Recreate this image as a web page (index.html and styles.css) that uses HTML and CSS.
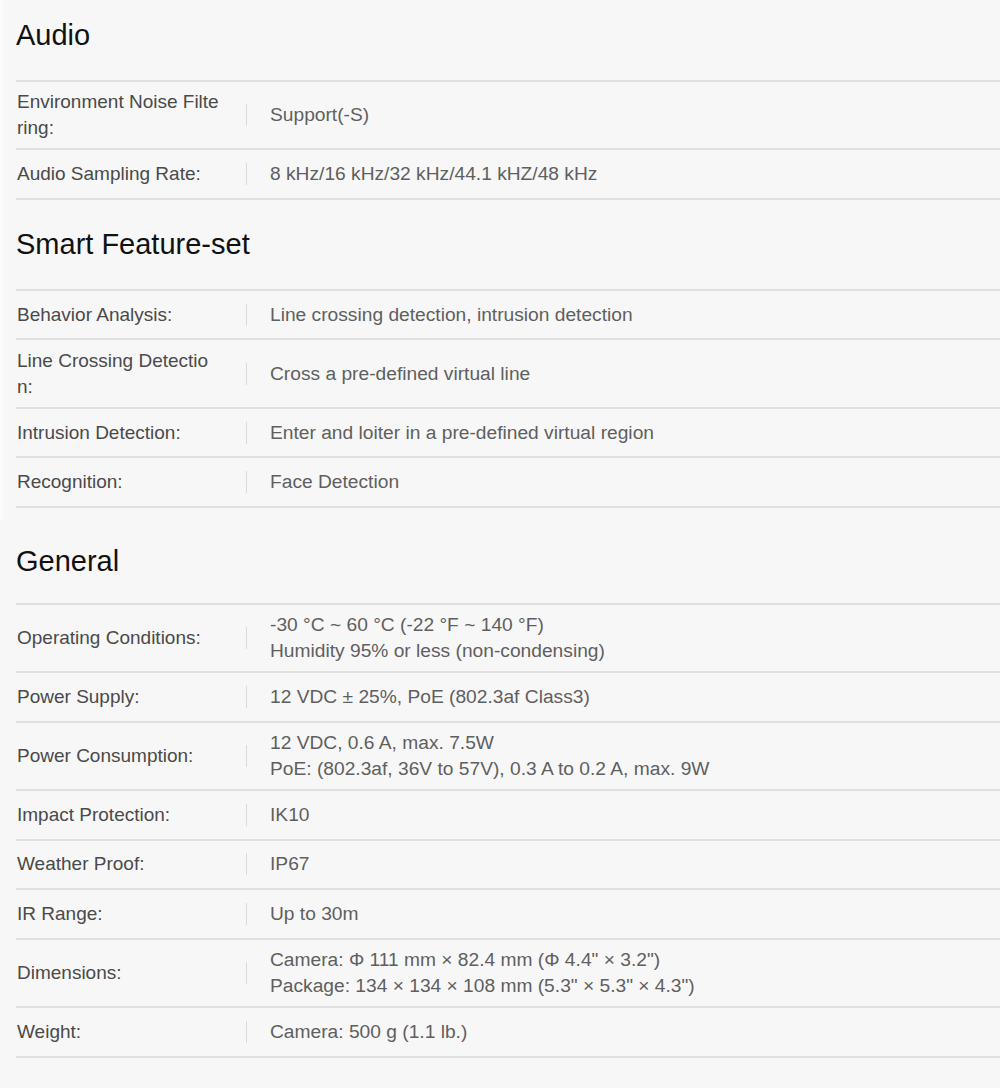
FILE: index.html
```html
<!DOCTYPE html>
<html lang="en">
<head>
<meta charset="utf-8">
<title>Specifications</title>
<link rel="stylesheet" href="styles.css">
</head>
<body>
<div class="page">
  <div class="group-top">
    <section class="section">
      <h2 class="section-title">Audio</h2>
      <div class="spec-table">
        <div class="row"><div class="label">Environment Noise Filtering:</div><div class="value">Support(-S)</div></div>
        <div class="row"><div class="label">Audio Sampling Rate:</div><div class="value">8 kHz/16 kHz/32 kHz/44.1 kHZ/48 kHz</div></div>
      </div>
    </section>
    <section class="section section-smart">
      <h2 class="section-title">Smart Feature-set</h2>
      <div class="spec-table">
        <div class="row"><div class="label">Behavior Analysis:</div><div class="value">Line crossing detection, intrusion detection</div></div>
        <div class="row"><div class="label">Line Crossing Detection:</div><div class="value">Cross a pre-defined virtual line</div></div>
        <div class="row"><div class="label">Intrusion Detection:</div><div class="value">Enter and loiter in a pre-defined virtual region</div></div>
        <div class="row"><div class="label">Recognition:</div><div class="value">Face Detection</div></div>
      </div>
    </section>
  </div>
  <section class="section section-general">
    <h2 class="section-title">General</h2>
    <div class="spec-table">
      <div class="row"><div class="label">Operating Conditions:</div><div class="value">-30 °C ~ 60 °C (-22 °F ~ 140 °F)<br>Humidity 95% or less (non-condensing)</div></div>
      <div class="row"><div class="label">Power Supply:</div><div class="value">12 VDC ± 25%, PoE (802.3af Class3)</div></div>
      <div class="row"><div class="label">Power Consumption:</div><div class="value">12 VDC, 0.6 A, max. 7.5W<br>PoE: (802.3af, 36V to 57V), 0.3 A to 0.2 A, max. 9W</div></div>
      <div class="row"><div class="label">Impact Protection:</div><div class="value">IK10</div></div>
      <div class="row"><div class="label">Weather Proof:</div><div class="value">IP67</div></div>
      <div class="row"><div class="label">IR Range:</div><div class="value">Up to 30m</div></div>
      <div class="row"><div class="label">Dimensions:</div><div class="value">Camera: Φ 111 mm × 82.4 mm (Φ 4.4" × 3.2")<br>Package: 134 × 134 × 108 mm (5.3" × 5.3" × 4.3")</div></div>
      <div class="row"><div class="label">Weight:</div><div class="value">Camera: 500 g (1.1 lb.)</div></div>
    </div>
  </section>
</div>
</body>
</html>
```
FILE: styles.css
```css
html, body {
  margin: 0;
  padding: 0;
  background: #f7f7f7;
}

body {
  font-family: "Liberation Sans", Arial, sans-serif;
  color: #4a4a4a;
}

.page {
  width: 1000px;
  overflow: hidden;
}

.group-top {
  border-left: 3px solid #fbfbfb;
  padding-bottom: 13px;
}

.group-top .section {
  padding-left: 13px;
}

.section {
  padding-left: 16px;
}

.section-smart {
  padding-top: 9px;
}

.section-general {
  padding-top: 5px;
}

.section-title {
  margin: 0;
  padding: 17px 0 27px;
  font-size: 29px;
  line-height: 36px;
  font-weight: normal;
  color: #111;
}

.section-general .section-title {
  padding-bottom: 24px;
}

.spec-table {
  border-top: 2px solid #e0e0e0;
}

.row {
  display: flex;
  align-items: center;
  box-sizing: border-box;
  min-height: 49.6px;
  padding: 7.15px 0;
  border-bottom: 2px solid #e0e0e0;
  font-size: 19px;
  line-height: 26px;
}

.label {
  flex: 0 0 204px;
  width: 204px;
  padding-left: 1px;
  margin-right: 25px;
  word-break: break-all;
  color: #4a4a4a;
}

.value {
  flex: 1;
  position: relative;
  padding-left: 24px;
  font-size: 19.2px;
  color: #5f5f5f;
}

.value::before {
  content: "";
  position: absolute;
  left: 0;
  top: 50%;
  width: 1px;
  height: 22px;
  margin-top: -11px;
  background: #dadada;
}
```
